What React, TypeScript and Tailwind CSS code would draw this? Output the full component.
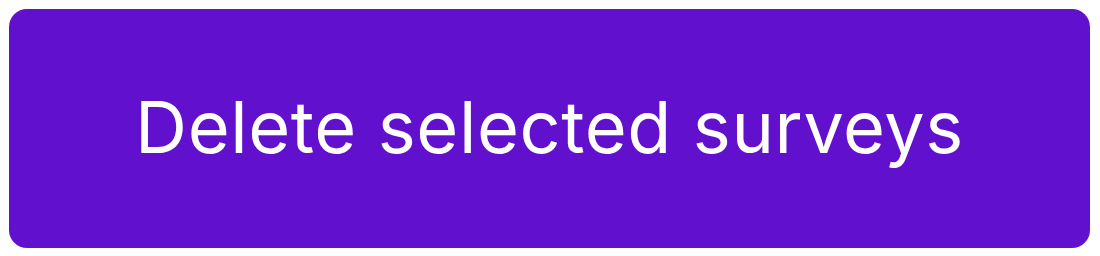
export default function App() {
  return (
    <div className="w-[1100px] h-[256px] bg-white p-[9px] pr-[10px] pb-[8px]">
      <button
        type="button"
        className="w-full h-full flex items-center justify-center rounded-[18px] bg-[#6111ce] text-white text-[72px] leading-none font-normal tracking-[0.6px] pb-[4px]"
        style={{ fontFamily: "Inter, 'Noto Sans', sans-serif" }}
      >
        Delete selected surveys
      </button>
    </div>
  );
}
